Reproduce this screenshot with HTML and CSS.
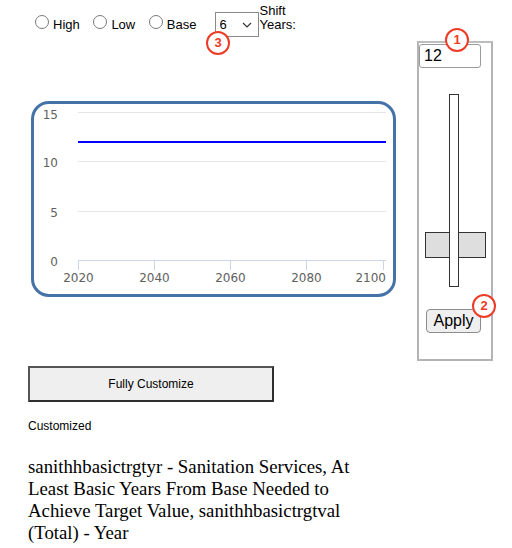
FILE: index.html
```html
<!DOCTYPE html>
<html lang="en">
<head>
    <meta charset="UTF-8">
    <meta name="viewport" content="width=device-width, initial-scale=1.0">
    <title>Sanitation Target Years</title>
    <link rel="stylesheet" href="styles.css">
</head>
<body>

<div class="page">
    <div class="main">
        <div class="controls">
            <label class="opt"><input type="radio" name="scenario" class="radio">High</label>
            <label class="opt"><input type="radio" name="scenario" class="radio">Low</label>
            <label class="opt opt-last"><input type="radio" name="scenario" class="radio">Base</label><span class="select-wrap"><select class="shift"><option>6</option></select><svg class="chevron" width="10" height="6" viewBox="0 0 10 6"><path d="M1 1 L5 5 L9 1" fill="none" stroke="#333" stroke-width="1.2"/></svg></span><span class="shift-label">Shift Years:</span>
        </div>

        <div class="chart">
            <svg width="359" height="190" viewBox="0 0 359 190">
                <g stroke="#e6e6e6" stroke-width="1">
                    <line x1="44" y1="8.5" x2="352" y2="8.5"/>
                    <line x1="44" y1="57.5" x2="352" y2="57.5"/>
                    <line x1="44" y1="107.5" x2="352" y2="107.5"/>
                </g>
                <g stroke="#ccd6eb" stroke-width="1">
                    <line x1="44" y1="156.5" x2="352" y2="156.5"/>
                    <line x1="44.5" y1="156" x2="44.5" y2="166"/>
                    <line x1="120.5" y1="156" x2="120.5" y2="166"/>
                    <line x1="196.5" y1="156" x2="196.5" y2="166"/>
                    <line x1="272.5" y1="156" x2="272.5" y2="166"/>
                    <line x1="349.5" y1="156" x2="349.5" y2="166"/>
                </g>
                <line x1="44" y1="38" x2="352" y2="38" stroke="#0000ff" stroke-width="2"/>
                <g class="axis-label" text-anchor="end">
                    <text x="24" y="15">15</text>
                    <text x="24" y="63">10</text>
                    <text x="24" y="113">5</text>
                    <text x="24" y="162">0</text>
                </g>
                <g class="axis-label" text-anchor="middle">
                    <text x="44.5" y="178">2020</text>
                    <text x="120.5" y="178">2040</text>
                    <text x="196.5" y="178">2060</text>
                    <text x="272.5" y="178">2080</text>
                    <text x="352" y="178" text-anchor="end">2100</text>
                </g>
            </svg>
        </div>

        <button class="customize">Fully Customize</button>
        <p class="status">Customized</p>
        <h3 class="title">sanithhbasictrgtyr - Sanitation Services, At Least Basic Years From Base Needed to Achieve Target Value, sanithhbasictrgtval (Total) - Year</h3>
    </div>

    <div class="side">
        <input class="value" type="text" value="12">
        <div class="slider">
            <div class="thumb"></div>
            <div class="track"></div>
        </div>
        <button class="apply">Apply</button>
    </div>

    <span class="marker marker-1">1</span>
    <span class="marker marker-2">2</span>
    <span class="marker marker-3">3</span>
</div>

</body>
</html>
```

FILE: styles.css
```css
body {
    margin: 0;
    padding: 0;
    font-family: 'Liberation Sans', Arial, sans-serif;
    color: #000;
    background: #fff;
}

.page {
    position: relative;
    display: flex;
    align-items: flex-start;
}

.main {
    width: 389px;
    padding-left: 28px;
}

/* top row of scenario options */
.controls {
    padding-top: 4px;
    padding-left: 7px;
    font-size: 13px;
    white-space: nowrap;
}

.opt {
    margin-right: 10px;
}

.opt-last {
    margin-right: 18px;
}

.radio {
    appearance: none;
    -webkit-appearance: none;
    display: inline-block;
    width: 14px;
    height: 14px;
    margin: 0 4px 0 0;
    border: 1px solid #7a7a7a;
    border-radius: 50%;
    background: #fff;
    box-sizing: border-box;
}

.select-wrap {
    position: relative;
    display: inline-block;
}

.shift {
    appearance: none;
    -webkit-appearance: none;
    width: 44px;
    height: 25px;
    padding: 0 0 0 4px;
    border: 1px solid #8a8a8a;
    border-radius: 0;
    background: #fff;
    font-family: 'Liberation Sans', Arial, sans-serif;
    font-size: 13px;
    color: #000;
}

.chevron {
    position: absolute;
    right: 7px;
    top: 10px;
}

.shift-label {
    display: inline-block;
    width: 40px;
    margin-left: 1px;
    line-height: 13.5px;
    white-space: normal;
}

/* chart */
.chart {
    width: 365px;
    height: 196px;
    box-sizing: border-box;
    margin: 64px 0 0 3px;
    border: 3px solid #4572a7;
    border-radius: 18px;
    background: #fff;
}

.chart svg {
    display: block;
}

.axis-label {
    font-family: 'DejaVu Sans', sans-serif;
    font-size: 12px;
    fill: #606060;
}

.customize {
    display: block;
    width: 246px;
    height: 36px;
    margin-top: 69px;
    border: 2px solid #2e2e2e;
    border-top-color: #555;
    border-left-color: #555;
    background: #efefef;
    font-family: 'Liberation Sans', Arial, sans-serif;
    font-size: 12px;
    color: #000;
}

.status {
    margin: 17px 0 0;
    font-size: 12px;
}

.title {
    max-width: 345px;
    margin: 23px 0 0;
    font-family: 'Liberation Serif', 'Times New Roman', serif;
    font-size: 18.8px;
    font-weight: normal;
    line-height: 22.3px;
}

/* slider panel */
.side {
    width: 76px;
    height: 320px;
    box-sizing: border-box;
    margin-top: 41px;
    border: 2px solid #b4b4b4;
    border-top-color: #bdbdbd;
}

.value {
    display: block;
    width: 62px;
    height: 24px;
    box-sizing: border-box;
    margin: 1px 0 0 0;
    padding: 0 4px;
    border: 1px solid #9a9a9a;
    border-radius: 3px;
    font-family: 'Liberation Sans', Arial, sans-serif;
    font-size: 16px;
    color: #000;
}

.slider {
    position: relative;
    height: 193px;
    margin-top: 26px;
}

.track {
    position: relative;
    width: 10px;
    height: 100%;
    box-sizing: border-box;
    margin-left: 30px;
    border: 1px solid #333;
    background: #fff;
}

.thumb {
    position: absolute;
    left: 6px;
    top: 138px;
    width: 61px;
    height: 26px;
    box-sizing: border-box;
    border: 1px solid #333;
    background: #dedede;
}

.apply {
    display: block;
    width: 55px;
    height: 24px;
    margin: 22px 0 0 7px;
    padding: 0;
    border: 1px solid #8c8c8c;
    border-radius: 4px;
    background: #efefef;
    font-family: 'Liberation Sans', Arial, sans-serif;
    font-size: 16px;
    color: #000;
}

/* numbered callouts */
.marker {
    position: absolute;
    width: 24px;
    height: 24px;
    box-sizing: border-box;
    border: 2px solid #ee3b26;
    border-radius: 50%;
    background: #fff;
    color: #ee3b26;
    font-family: 'Liberation Sans', Arial, sans-serif;
    font-size: 13px;
    font-weight: bold;
    line-height: 20px;
    text-align: center;
}

.marker-1 {
    left: 445px;
    top: 28px;
}

.marker-2 {
    left: 472px;
    top: 294px;
}

.marker-3 {
    left: 206px;
    top: 31px;
}
```
